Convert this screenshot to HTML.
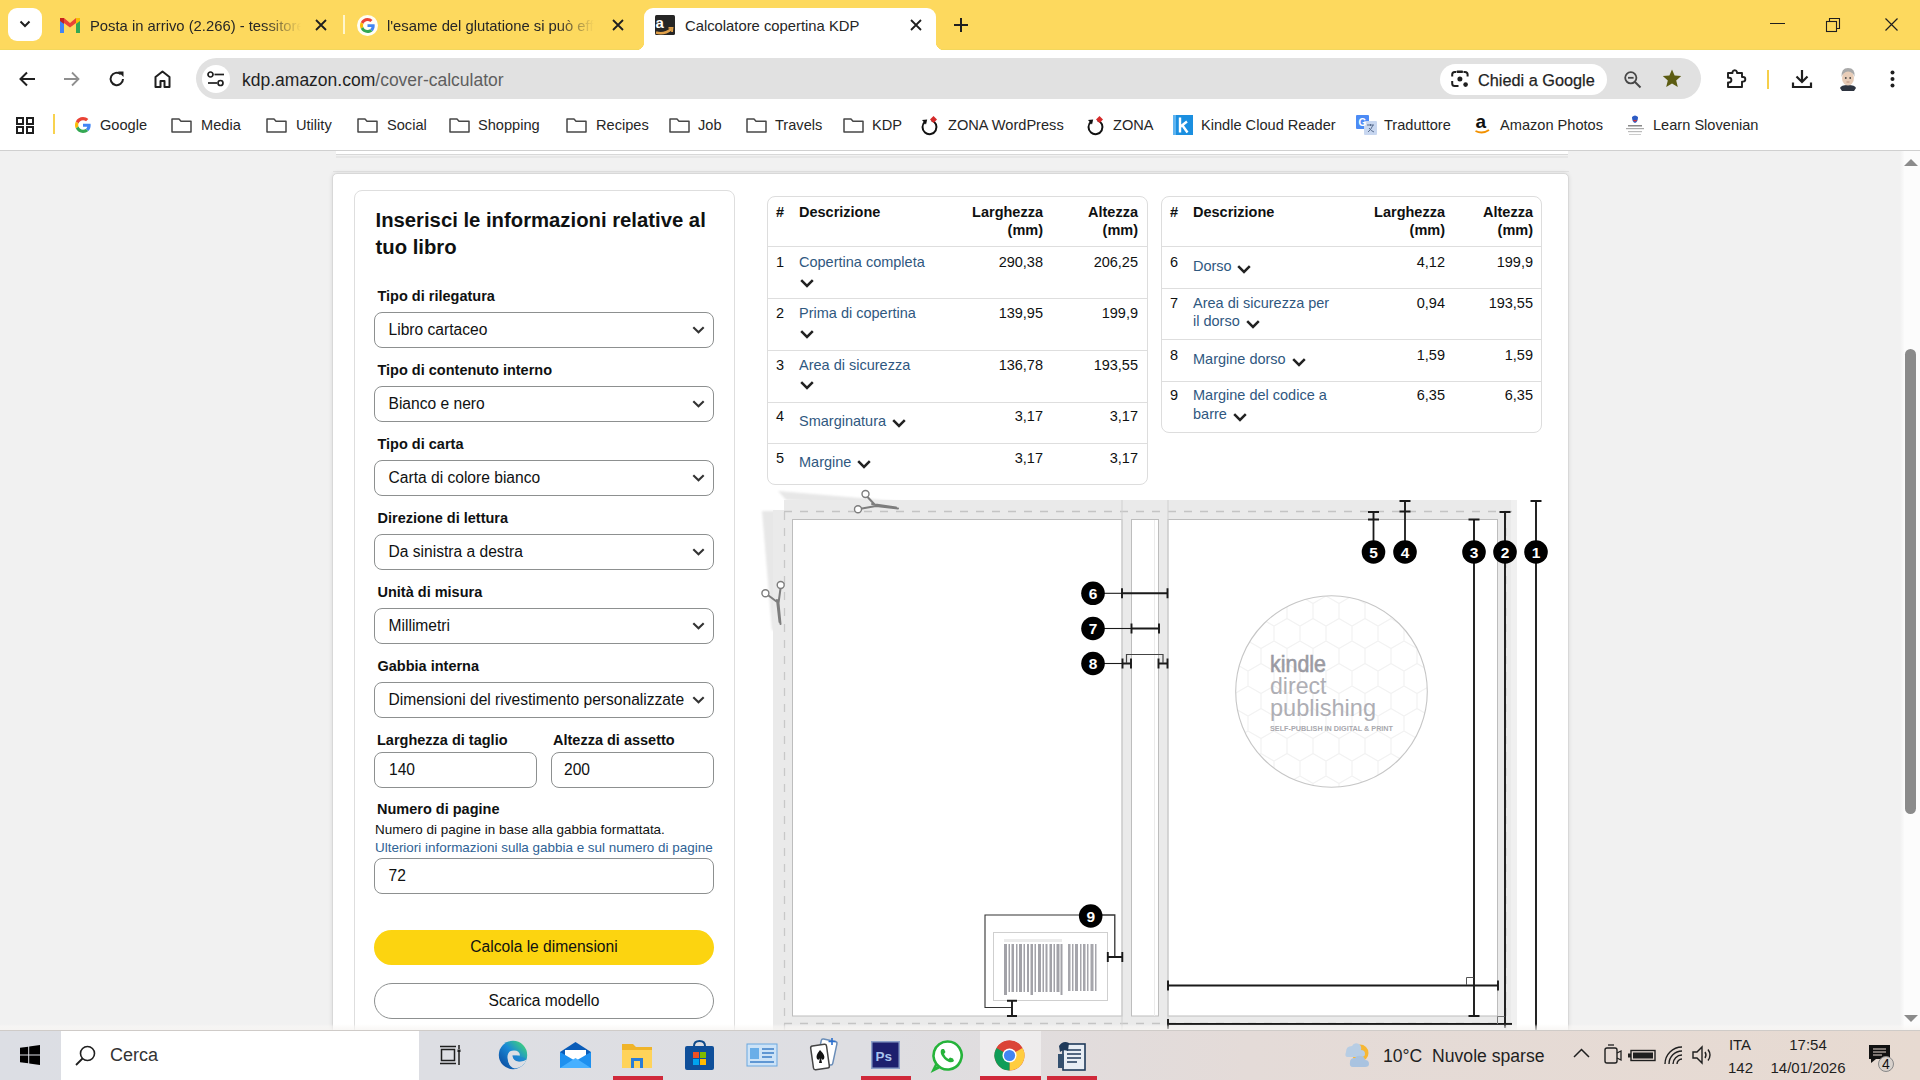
<!DOCTYPE html>
<html><head><meta charset="utf-8">
<style>
*{box-sizing:border-box;margin:0;padding:0}
html,body{width:1920px;height:1080px;overflow:hidden;background:#f1f1f1;font-family:"Liberation Sans",sans-serif;color:#0f1111}
.a{position:absolute;white-space:nowrap}
svg{position:absolute;overflow:visible}
#tabbar{position:absolute;left:0;top:0;width:1920px;height:50px;background:#fdd95e}
#toolbar{position:absolute;left:0;top:50px;width:1920px;height:50px;background:#fff}
#bookbar{position:absolute;left:0;top:100px;width:1920px;height:51px;background:#fff;border-bottom:1px solid #d0d0d0}
.tabt{font-size:14.8px;color:#262626;top:18px;line-height:17px}
.bm{font-size:14.6px;color:#262626;top:117px;line-height:17px}
#taskbar{position:absolute;left:0;top:1030px;width:1920px;height:50px;background:linear-gradient(90deg,#dcdee4 0%,#dedee2 45%,#e4dbd8 65%,#e7dad1 100%)}
.lbl{font-size:14.5px;font-weight:bold;line-height:17px;color:#0f1111}
.sel{height:36px;border:1px solid #8d9090;border-radius:8px;background:#fff}
.stxt{font-size:15.6px;line-height:18px;color:#0f1111}
</style></head><body>
<!-- TAB BAR -->
<div id="tabbar">
  <div class="a" style="left:0;top:48.5px;width:1920px;height:1.5px;background:#f3d75c"></div>
  <div class="a" style="left:8px;top:8px;width:34px;height:33px;background:#fff;border-radius:9px"></div>
  <svg style="left:19px;top:20px" width="12" height="8" viewBox="0 0 12 8"><path d="M1.5 1.5 L6 6 L10.5 1.5" fill="none" stroke="#1f1f1f" stroke-width="2"/></svg>
  <!-- gmail -->
  <svg style="left:60px;top:18px" width="20" height="15" viewBox="0 0 20 15"><path d="M0 2 V15 H4 V5 Z" fill="#4285f4"/><path d="M16 5 V15 H20 V2 Z" fill="#34a853"/><path d="M0 2 L10 9.5 L20 2 V0 L16 0 L10 5 L4 0 L0 0Z" fill="#ea4335"/><path d="M16 0 L20 0 V3 L16 6Z" fill="#fbbc04"/><path d="M0 0 H4 V6 L0 3Z" fill="#c5221f"/></svg>
  <div class="a tabt" style="left:90px;width:211px;overflow:hidden;-webkit-mask-image:linear-gradient(90deg,#000 82%,transparent 100%)">Posta in arrivo (2.266) - tessitore</div>
  <svg style="left:315px;top:19px" width="12" height="12" viewBox="0 0 12 12"><path d="M1 1 L11 11 M11 1 L1 11" stroke="#1f1f1f" stroke-width="1.8"/></svg>
  <div class="a" style="left:342.5px;top:15px;width:2px;height:19px;background:#fff6cc"></div>
  <!-- google G -->
  <div class="a" style="left:357px;top:14.5px;width:21px;height:21px;border-radius:50%;background:#fffef6"></div><svg style="left:360px;top:17.5px" width="15" height="15" viewBox="0 0 48 48"><path fill="#EA4335" d="M24 9.5c3.54 0 6.71 1.22 9.21 3.6l6.85-6.85C35.9 2.38 30.47 0 24 0 14.62 0 6.51 5.38 2.56 13.22l7.98 6.19C12.43 13.72 17.74 9.5 24 9.5z"/><path fill="#4285F4" d="M46.98 24.55c0-1.57-.15-3.09-.38-4.55H24v9.02h12.94c-.58 2.96-2.26 5.48-4.78 7.18l7.73 6c4.51-4.18 7.09-10.36 7.09-17.65z"/><path fill="#FBBC05" d="M10.53 28.59c-.48-1.45-.76-2.99-.76-4.59s.27-3.14.76-4.59l-7.98-6.19C.92 16.46 0 20.12 0 24c0 3.88.92 7.54 2.56 10.78l7.97-6.19z"/><path fill="#34A853" d="M24 48c6.48 0 11.93-2.13 15.89-5.81l-7.73-6c-2.15 1.45-4.92 2.3-8.16 2.3-6.26 0-11.57-4.22-13.47-9.91l-7.98 6.19C6.51 42.62 14.62 48 24 48z"/></svg>
  <div class="a tabt" style="left:387px;width:207px;overflow:hidden;-webkit-mask-image:linear-gradient(90deg,#000 82%,transparent 100%)">l'esame del glutatione si può effettuare</div>
  <svg style="left:612px;top:19px" width="12" height="12" viewBox="0 0 12 12"><path d="M1 1 L11 11 M11 1 L1 11" stroke="#1f1f1f" stroke-width="1.8"/></svg>
  <!-- active tab -->
  <div class="a" style="left:644px;top:8px;width:292px;height:44px;background:#fff;border-radius:9px 9px 0 0"></div>
  <div class="a" style="left:636px;top:42px;width:8px;height:8px;background:radial-gradient(circle at 0 0,transparent 8px,#fff 8.5px)"></div>
  <div class="a" style="left:936px;top:42px;width:8px;height:8px;background:radial-gradient(circle at 8px 0,transparent 8px,#fff 8.5px)"></div>
  <svg style="left:655px;top:15px" width="20" height="20" viewBox="0 0 20 20"><rect width="20" height="20" rx="1.5" fill="#262626"/><text x="0.6" y="12.5" font-family="Liberation Sans" font-weight="bold" font-size="15" fill="#fff">a</text><path d="M1 17.5 Q9 20 16.5 14" stroke="#e0a04a" stroke-width="2.6" fill="none"/><path d="M13.5 12.8 L17.5 12.8 L17 17" stroke="#e0a04a" stroke-width="1.8" fill="none"/></svg>
  <div class="a tabt" style="left:685px">Calcolatore copertina KDP</div>
  <svg style="left:910px;top:19px" width="12" height="12" viewBox="0 0 12 12"><path d="M1 1 L11 11 M11 1 L1 11" stroke="#1f1f1f" stroke-width="1.8"/></svg>
  <svg style="left:954px;top:18px" width="14" height="14" viewBox="0 0 14 14"><path d="M7 0 V14 M0 7 H14" stroke="#1f1f1f" stroke-width="2"/></svg>
  <!-- window controls -->
  <div class="a" style="left:1770px;top:23px;width:15px;height:1px;background:#1f1f1f"></div>
  <svg style="left:1826px;top:18px" width="14" height="14" viewBox="0 0 14 14"><rect x="0.5" y="3.5" width="10" height="10" fill="none" stroke="#1f1f1f" stroke-width="1.1"/><path d="M3.5 3.5 V0.5 H13.5 V10.5 H10.5" fill="none" stroke="#1f1f1f" stroke-width="1.1"/></svg>
  <svg style="left:1885px;top:18px" width="13" height="13" viewBox="0 0 13 13"><path d="M0.5 0.5 L12.5 12.5 M12.5 0.5 L0.5 12.5" stroke="#1f1f1f" stroke-width="1.2"/></svg>
</div>

<!-- TOOLBAR -->
<div id="toolbar"></div>
<svg style="left:19px;top:71px" width="17" height="16" viewBox="0 0 17 16"><path d="M16 8 H2 M8 1.5 L1.5 8 L8 14.5" fill="none" stroke="#1f1f1f" stroke-width="2"/></svg>
<svg style="left:63px;top:71px" width="17" height="16" viewBox="0 0 17 16"><path d="M1 8 H15 M9 1.5 L15.5 8 L9 14.5" fill="none" stroke="#8f8f8f" stroke-width="1.8"/></svg>
<svg style="left:108px;top:70px" width="18" height="18" viewBox="0 0 18 18"><path d="M15 9 A6.2 6.2 0 1 1 12.8 4.2" fill="none" stroke="#1f1f1f" stroke-width="2"/><path d="M10 1.5 H15.5 V7 Z" fill="#1f1f1f"/></svg>
<svg style="left:154px;top:70px" width="17" height="18" viewBox="0 0 17 18"><path d="M1.5 17 V7 L8.5 1.5 L15.5 7 V17 H10.5 V11 H6.5 V17 Z" fill="none" stroke="#1f1f1f" stroke-width="2" stroke-linejoin="round"/></svg>
<div class="a" style="left:196px;top:58px;width:1505px;height:41px;background:#e1e1e1;border-radius:21px"></div>
<div class="a" style="left:202px;top:65px;width:28px;height:28px;background:#fff;border-radius:14px"></div>
<svg style="left:207px;top:71px" width="18" height="16" viewBox="0 0 18 16"><circle cx="3.5" cy="3.5" r="2.5" fill="none" stroke="#1f1f1f" stroke-width="1.7"/><path d="M7.5 3.5 H17" stroke="#1f1f1f" stroke-width="1.7"/><circle cx="13.5" cy="12" r="2.5" fill="none" stroke="#1f1f1f" stroke-width="1.7"/><path d="M1 12 H10" stroke="#1f1f1f" stroke-width="1.7"/></svg>
<div class="a" style="left:242px;top:69px;font-size:17.5px;line-height:22px;color:#1f1f1f">kdp.amazon.com<span style="color:#5e5e5e">/cover-calculator</span></div>
<div class="a" style="left:1440px;top:64px;width:167px;height:31px;background:#fff;border-radius:16px"></div>
<svg style="left:1451px;top:70px" width="18" height="18" viewBox="0 0 18 18"><path d="M1.2 6.5 V4.5 Q1.2 2 3.7 2 H5 M12.5 2 H14 Q16.6 2 16.6 4.5 V6.5 M1.2 11 V13.5 Q1.2 16 3.7 16 H7.5" fill="none" stroke="#1f1f1f" stroke-width="2"/><rect x="5.5" y="0.5" width="6.5" height="2.5" rx="0.8" fill="#1f1f1f"/><circle cx="8.9" cy="9" r="2.5" fill="#1f1f1f"/><circle cx="14.6" cy="14.6" r="2.3" fill="#1f1f1f"/></svg>
<div class="a" style="left:1478px;top:70px;font-size:16.3px;line-height:20px;color:#1f1f1f;-webkit-text-stroke:0.25px #1f1f1f">Chiedi a Google</div>
<svg style="left:1624px;top:71px" width="18" height="18" viewBox="0 0 18 18"><circle cx="6.8" cy="6.8" r="5.6" fill="none" stroke="#474747" stroke-width="1.8"/><path d="M4 6.8 H9.6" stroke="#474747" stroke-width="1.8"/><path d="M11 11 L16.5 16.5" stroke="#474747" stroke-width="2"/></svg>
<svg style="left:1662px;top:69px" width="20" height="19" viewBox="0 0 20 19"><path d="M10 0.5 L12.6 6.6 L19.2 7.1 L14.2 11.4 L15.8 18 L10 14.4 L4.2 18 L5.8 11.4 L0.8 7.1 L7.4 6.6 Z" fill="#5c5c12"/></svg>
<svg style="left:1726px;top:68px" width="22" height="22" viewBox="0 0 22 22"><path d="M2 5 H6.5 V4 A2.3 2.3 0 0 1 11 4 V5 H16 V9 H17 A2.3 2.3 0 0 1 17 13.6 H16 V19 H2 V14.5 H3 A2.4 2.4 0 0 0 3 9.7 H2 Z" fill="none" stroke="#1f1f1f" stroke-width="1.9" stroke-linejoin="round"/></svg>
<div class="a" style="left:1767px;top:70px;width:2px;height:19px;background:#f6cf4a"></div>
<svg style="left:1792px;top:69px" width="20" height="20" viewBox="0 0 20 20"><path d="M10 1 V13 M4.5 7.5 L10 13 L15.5 7.5 M1 13.5 V18 H19 V13.5" fill="none" stroke="#1f1f1f" stroke-width="2.2"/></svg>
<svg style="left:1837px;top:66px" width="22" height="26" viewBox="0 0 22 26"><path d="M3 22 Q4 19 11 19 Q18 19 19 22 L17 25 H5Z" fill="#2e3440"/><ellipse cx="11" cy="12" rx="6" ry="7.5" fill="#e8cdb8"/><path d="M4.5 11 Q4 2 11 2 Q18.5 2 17.5 11 Q16.5 6 11 5.5 Q6 6 4.5 11Z" fill="#a9a9a9"/><circle cx="8.8" cy="12" r="0.9" fill="#444"/><circle cx="13.2" cy="12" r="0.9" fill="#444"/><path d="M9.5 16 H12.5" stroke="#b08070" stroke-width="0.8"/></svg>
<svg style="left:1890px;top:70px" width="5" height="18" viewBox="0 0 5 18"><circle cx="2.5" cy="2.5" r="2" fill="#1f1f1f"/><circle cx="2.5" cy="9" r="2" fill="#1f1f1f"/><circle cx="2.5" cy="15.5" r="2" fill="#1f1f1f"/></svg>

<!-- BOOKMARKS -->
<div id="bookbar"></div>
<svg style="left:16px;top:117px" width="18" height="17" viewBox="0 0 18 17"><rect x="1" y="1" width="6" height="6" fill="none" stroke="#1f1f1f" stroke-width="2"/><rect x="11" y="1" width="6" height="6" fill="none" stroke="#1f1f1f" stroke-width="2"/><rect x="1" y="10" width="6" height="6" fill="none" stroke="#1f1f1f" stroke-width="2"/><rect x="11" y="10" width="6" height="6" fill="none" stroke="#1f1f1f" stroke-width="2"/></svg>
<div class="a" style="left:53px;top:114px;width:2px;height:20px;background:#f8d24f"></div>
<svg style="left:75px;top:117px" width="16" height="16" viewBox="0 0 48 48"><path fill="#EA4335" d="M24 9.5c3.54 0 6.71 1.220 9.21 3.6l6.85-6.85C35.9 2.38 30.47 0 24 0 14.62 0 6.51 5.38 2.56 13.22l7.98 6.19C12.43 13.72 17.740 9.5 24 9.5z"/><path fill="#4285F4" d="M46.98 24.55c0-1.57-.15-3.09-.38-4.55H24v9.02h12.94c-.58 2.96-2.26 5.48-4.78 7.18l7.73 6c4.51-4.18 7.09-10.36 7.09-17.65z"/><path fill="#FBBC05" d="M10.53 28.59c-.48-1.45-.76-2.99-.76-4.59s.27-3.14.76-4.59l-7.98-6.19C.92 16.46 0 20.12 0 24c0 3.88.92 7.54 2.56 10.78l7.97-6.19z"/><path fill="#34A853" d="M24 48c6.48 0 11.93-2.13 15.890-5.81l-7.73-6c-2.15 1.45-4.92 2.3-8.16 2.3-6.26 0-11.57-4.22-13.47-9.91l-7.98 6.19C6.51 42.62 14.62 48 24 48z"/></svg>
<div class="a bm" style="left:100px">Google</div>
<svg style="left:171px;top:118px" width="21" height="15" viewBox="0 0 21 15"><path d="M1 1 H8 L10 3.2 H20 V14 H1 Z" fill="none" stroke="#474747" stroke-width="1.5" stroke-linejoin="round"/></svg>
<div class="a bm" style="left:201px">Media</div>
<svg style="left:266px;top:118px" width="21" height="15" viewBox="0 0 21 15"><path d="M1 1 H8 L10 3.2 H20 V14 H1 Z" fill="none" stroke="#474747" stroke-width="1.5" stroke-linejoin="round"/></svg>
<div class="a bm" style="left:296px">Utility</div>
<svg style="left:357px;top:118px" width="21" height="15" viewBox="0 0 21 15"><path d="M1 1 H8 L10 3.2 H20 V14 H1 Z" fill="none" stroke="#474747" stroke-width="1.5" stroke-linejoin="round"/></svg>
<div class="a bm" style="left:387px">Social</div>
<svg style="left:449px;top:118px" width="21" height="15" viewBox="0 0 21 15"><path d="M1 1 H8 L10 3.2 H20 V14 H1 Z" fill="none" stroke="#474747" stroke-width="1.5" stroke-linejoin="round"/></svg>
<div class="a bm" style="left:478px">Shopping</div>
<svg style="left:566px;top:118px" width="21" height="15" viewBox="0 0 21 15"><path d="M1 1 H8 L10 3.2 H20 V14 H1 Z" fill="none" stroke="#474747" stroke-width="1.5" stroke-linejoin="round"/></svg>
<div class="a bm" style="left:596px">Recipes</div>
<svg style="left:669px;top:118px" width="21" height="15" viewBox="0 0 21 15"><path d="M1 1 H8 L10 3.2 H20 V14 H1 Z" fill="none" stroke="#474747" stroke-width="1.5" stroke-linejoin="round"/></svg>
<div class="a bm" style="left:698px">Job</div>
<svg style="left:746px;top:118px" width="21" height="15" viewBox="0 0 21 15"><path d="M1 1 H8 L10 3.2 H20 V14 H1 Z" fill="none" stroke="#474747" stroke-width="1.5" stroke-linejoin="round"/></svg>
<div class="a bm" style="left:775px">Travels</div>
<svg style="left:843px;top:118px" width="21" height="15" viewBox="0 0 21 15"><path d="M1 1 H8 L10 3.2 H20 V14 H1 Z" fill="none" stroke="#474747" stroke-width="1.5" stroke-linejoin="round"/></svg>
<div class="a bm" style="left:872px">KDP</div>
<svg style="left:919px;top:115px" width="20" height="20" viewBox="0 0 20 20"><path d="M6.2 6.6 A7 7 0 1 0 12.5 5.4" fill="none" stroke="#111" stroke-width="2"/><path d="M3 5 L8.2 4.6 L7 9.4 Z" fill="#111"/><path d="M14.5 1 L18 4.5 L14.5 8 L11 4.5Z" fill="#d42a2a"/></svg>
<div class="a bm" style="left:948px">ZONA WordPress</div>
<svg style="left:1085px;top:115px" width="20" height="20" viewBox="0 0 20 20"><path d="M6.2 6.6 A7 7 0 1 0 12.5 5.4" fill="none" stroke="#111" stroke-width="2"/><path d="M3 5 L8.2 4.6 L7 9.4 Z" fill="#111"/><path d="M14.5 1 L18 4.5 L14.5 8 L11 4.5Z" fill="#d42a2a"/></svg>
<div class="a bm" style="left:1113px">ZONA</div>
<svg style="left:1173px;top:115px" width="20" height="20" viewBox="0 0 20 20"><rect width="20" height="20" fill="#1b8fe0"/><rect x="0" y="0" width="3" height="20" fill="#5fb4f0"/><path d="M7 2.5 V17.5 M7 12 L14 6.5 M9.5 10.5 L14.5 17.5" stroke="#fff" stroke-width="2.4" fill="none"/></svg>
<div class="a bm" style="left:1201px">Kindle Cloud Reader</div>
<svg style="left:1356px;top:115px" width="22" height="20" viewBox="0 0 22 20"><rect x="0" y="0" width="13" height="14" rx="1" fill="#4c8bf5"/><rect x="8" y="6" width="13" height="14" rx="1" fill="#c8d7f0"/><text x="2.5" y="11" font-family="Liberation Sans" font-weight="bold" font-size="10" fill="#fff">G</text><path d="M11 10 H18 M14.5 9 V11 M12 17 Q15 15 17 10 M13 13 Q15 16 18 17" stroke="#5a6f90" stroke-width="1" fill="none"/></svg>
<div class="a bm" style="left:1384px">Traduttore</div>
<svg style="left:1474px;top:113px" width="18" height="22" viewBox="0 0 18 22"><text x="1.5" y="15" font-family="Liberation Sans" font-weight="bold" font-size="19" fill="#111">a</text><path d="M1.5 18 Q8.5 21.5 15 17" stroke="#f29100" stroke-width="1.8" fill="none"/></svg>
<div class="a bm" style="left:1500px">Amazon Photos</div>
<svg style="left:1624px;top:114px" width="22" height="22" viewBox="0 0 22 22"><path d="M8 3 Q11 0 14 3 Q14 8 11 9 Q8 8 8 3Z" fill="#2d5bc4"/><path d="M9 6 Q11 9 13 6" fill="#e0302a"/><rect x="4" y="11" width="14" height="1.5" fill="#888"/><rect x="2" y="14" width="18" height="1.2" fill="#aaa"/><rect x="4" y="17" width="14" height="1.2" fill="#bbb"/><rect x="5" y="20" width="12" height="1" fill="#ccc"/></svg>
<div class="a bm" style="left:1653px">Learn Slovenian</div>
<!-- CONTENT -->
<div class="a" style="left:336px;top:151px;width:1232px;height:4px;background:#fff;border-bottom:1px solid #d8d8d8"></div>
<div class="a" style="left:336px;top:156px;width:1232px;height:2px;background:#e6e6e6"></div>
<div class="a" style="left:333px;top:171px;width:1236px;height:1px;background:#e2e2e2"></div>
<div class="a" style="left:332px;top:173px;width:1237px;height:900px;background:#fff;border:1px solid #d8d8d8;border-radius:5px;box-shadow:0 0 4px rgba(0,0,0,0.10)"></div>
<div class="a" style="left:354px;top:190px;width:381px;height:850px;background:#fff;border:1px solid #dedede;border-radius:8px"></div>
<div class="a" style="left:375.5px;top:207.57px;font-size:20.3px;line-height:24px;font-weight:700;color:#0f1111;">Inserisci le informazioni relative al</div>
<div class="a" style="left:375.5px;top:234.57px;font-size:20.3px;line-height:24px;font-weight:700;color:#0f1111;">tuo libro</div>
<div class="a" style="left:377.5px;top:288.38px;font-size:14.5px;line-height:17px;font-weight:700;color:#0f1111;">Tipo di rilegatura</div>
<div class="a sel" style="left:374px;top:312.4px;width:340px"></div>
<div class="a" style="left:388.5px;top:319.99px;font-size:15.6px;line-height:19px;font-weight:400;color:#0f1111;">Libro cartaceo</div>
<svg style="left:692px;top:325.9px" width="13" height="8" viewBox="0 0 13 8"><path d="M1.3 1.3 L6.5 6.3 L11.7 1.3" fill="none" stroke="#333" stroke-width="2.1"/></svg>
<div class="a" style="left:377.5px;top:362.38px;font-size:14.5px;line-height:17px;font-weight:700;color:#0f1111;">Tipo di contenuto interno</div>
<div class="a sel" style="left:374px;top:386.4px;width:340px"></div>
<div class="a" style="left:388.5px;top:393.99px;font-size:15.6px;line-height:19px;font-weight:400;color:#0f1111;">Bianco e nero</div>
<svg style="left:692px;top:399.9px" width="13" height="8" viewBox="0 0 13 8"><path d="M1.3 1.3 L6.5 6.3 L11.7 1.3" fill="none" stroke="#333" stroke-width="2.1"/></svg>
<div class="a" style="left:377.5px;top:436.38px;font-size:14.5px;line-height:17px;font-weight:700;color:#0f1111;">Tipo di carta</div>
<div class="a sel" style="left:374px;top:460.4px;width:340px"></div>
<div class="a" style="left:388.5px;top:467.99px;font-size:15.6px;line-height:19px;font-weight:400;color:#0f1111;">Carta di colore bianco</div>
<svg style="left:692px;top:473.9px" width="13" height="8" viewBox="0 0 13 8"><path d="M1.3 1.3 L6.5 6.3 L11.7 1.3" fill="none" stroke="#333" stroke-width="2.1"/></svg>
<div class="a" style="left:377.5px;top:510.38px;font-size:14.5px;line-height:17px;font-weight:700;color:#0f1111;">Direzione di lettura</div>
<div class="a sel" style="left:374px;top:534.4px;width:340px"></div>
<div class="a" style="left:388.5px;top:541.99px;font-size:15.6px;line-height:19px;font-weight:400;color:#0f1111;">Da sinistra a destra</div>
<svg style="left:692px;top:547.9px" width="13" height="8" viewBox="0 0 13 8"><path d="M1.3 1.3 L6.5 6.3 L11.7 1.3" fill="none" stroke="#333" stroke-width="2.1"/></svg>
<div class="a" style="left:377.5px;top:584.38px;font-size:14.5px;line-height:17px;font-weight:700;color:#0f1111;">Unità di misura</div>
<div class="a sel" style="left:374px;top:608.4px;width:340px"></div>
<div class="a" style="left:388.5px;top:615.99px;font-size:15.6px;line-height:19px;font-weight:400;color:#0f1111;">Millimetri</div>
<svg style="left:692px;top:621.9px" width="13" height="8" viewBox="0 0 13 8"><path d="M1.3 1.3 L6.5 6.3 L11.7 1.3" fill="none" stroke="#333" stroke-width="2.1"/></svg>
<div class="a" style="left:377.5px;top:658.38px;font-size:14.5px;line-height:17px;font-weight:700;color:#0f1111;">Gabbia interna</div>
<div class="a sel" style="left:374px;top:682.4px;width:340px"></div>
<div class="a" style="left:388.5px;top:689.99px;font-size:15.6px;line-height:19px;font-weight:400;color:#0f1111;">Dimensioni del rivestimento personalizzate</div>
<svg style="left:692px;top:695.9px" width="13" height="8" viewBox="0 0 13 8"><path d="M1.3 1.3 L6.5 6.3 L11.7 1.3" fill="none" stroke="#333" stroke-width="2.1"/></svg>
<div class="a" style="left:377px;top:732.18px;font-size:14.5px;line-height:17px;font-weight:700;color:#0f1111;">Larghezza di taglio</div>
<div class="a" style="left:553px;top:732.18px;font-size:14.5px;line-height:17px;font-weight:700;color:#0f1111;">Altezza di assetto</div>
<div class="a sel" style="left:374px;top:752px;width:163px"></div>
<div class="a sel" style="left:551px;top:752px;width:163px"></div>
<div class="a" style="left:389px;top:759.89px;font-size:15.6px;line-height:19px;font-weight:400;color:#0f1111;">140</div>
<div class="a" style="left:564px;top:759.89px;font-size:15.6px;line-height:19px;font-weight:400;color:#0f1111;">200</div>
<div class="a" style="left:377px;top:801.18px;font-size:14.5px;line-height:17px;font-weight:700;color:#0f1111;">Numero di pagine</div>
<div class="a" style="left:375px;top:822.34px;font-size:13.45px;line-height:16px;font-weight:400;color:#0f1111;">Numero di pagine in base alla gabbia formattata.</div>
<div class="a" style="left:375px;top:840.14px;font-size:13.45px;line-height:16px;font-weight:400;color:#2e6295;">Ulteriori informazioni sulla gabbia e sul numero di pagine</div>
<div class="a sel" style="left:374px;top:858.3px;width:340px"></div>
<div class="a" style="left:388.5px;top:865.89px;font-size:15.6px;line-height:19px;font-weight:400;color:#0f1111;">72</div>
<div class="a" style="left:374px;top:929.5px;width:340px;height:35.5px;border-radius:18px;background:#fcd410"></div>
<div class="a" style="left:244px;top:936.69px;width:600px;text-align:center;font-size:15.6px;line-height:19px;font-weight:400;color:#0f1111;">Calcola le dimensioni</div>
<div class="a" style="left:374px;top:983px;width:340px;height:36px;border-radius:18px;background:#fff;border:1px solid #8d9090"></div>
<div class="a" style="left:244px;top:990.59px;width:600px;text-align:center;font-size:15.6px;line-height:19px;font-weight:400;color:#0f1111;">Scarica modello</div>
<div class="a" style="left:767px;top:196px;width:381px;height:289px;border:1px solid #dddddd;border-radius:8px;background:#fff"></div>
<div class="a" style="left:768px;top:246px;width:379px;height:1px;background:#dedede"></div>
<div class="a" style="left:768px;top:298px;width:379px;height:1px;background:#dedede"></div>
<div class="a" style="left:768px;top:350px;width:379px;height:1px;background:#dedede"></div>
<div class="a" style="left:768px;top:402px;width:379px;height:1px;background:#dedede"></div>
<div class="a" style="left:768px;top:443px;width:379px;height:1px;background:#dedede"></div>
<div class="a" style="left:776px;top:203.68px;font-size:14.5px;line-height:17px;font-weight:700;color:#0f1111;">#</div>
<div class="a" style="left:799px;top:203.68px;font-size:14.5px;line-height:17px;font-weight:700;color:#0f1111;">Descrizione</div>
<div class="a" style="left:743px;top:203.68px;width:300px;text-align:right;font-size:14.5px;line-height:17px;font-weight:700;color:#0f1111;">Larghezza</div>
<div class="a" style="left:743px;top:221.78px;width:300px;text-align:right;font-size:14.5px;line-height:17px;font-weight:700;color:#0f1111;">(mm)</div>
<div class="a" style="left:838px;top:203.68px;width:300px;text-align:right;font-size:14.5px;line-height:17px;font-weight:700;color:#0f1111;">Altezza</div>
<div class="a" style="left:838px;top:221.78px;width:300px;text-align:right;font-size:14.5px;line-height:17px;font-weight:700;color:#0f1111;">(mm)</div>
<div class="a" style="left:776px;top:254.08px;font-size:14.5px;line-height:17px;font-weight:400;color:#0f1111;">1</div>
<div class="a" style="left:799px;top:254.08px;font-size:14.5px;line-height:17px;font-weight:400;color:#30587f;">Copertina completa</div>
<div class="a" style="left:743px;top:254.08px;width:300px;text-align:right;font-size:14.5px;line-height:17px;font-weight:400;color:#0f1111;">290,38</div>
<div class="a" style="left:838px;top:254.08px;width:300px;text-align:right;font-size:14.5px;line-height:17px;font-weight:400;color:#0f1111;">206,25</div>
<svg style="left:800.0px;top:279.3px" width="14" height="9" viewBox="0 0 14 9"><path d="M1.2 1.2 L7 7 L12.8 1.2" fill="none" stroke="#222" stroke-width="2.5"/></svg>
<div class="a" style="left:776px;top:305.18px;font-size:14.5px;line-height:17px;font-weight:400;color:#0f1111;">2</div>
<div class="a" style="left:799px;top:305.18px;font-size:14.5px;line-height:17px;font-weight:400;color:#30587f;">Prima di copertina</div>
<div class="a" style="left:743px;top:305.18px;width:300px;text-align:right;font-size:14.5px;line-height:17px;font-weight:400;color:#0f1111;">139,95</div>
<div class="a" style="left:838px;top:305.18px;width:300px;text-align:right;font-size:14.5px;line-height:17px;font-weight:400;color:#0f1111;">199,9</div>
<svg style="left:800.0px;top:329.8px" width="14" height="9" viewBox="0 0 14 9"><path d="M1.2 1.2 L7 7 L12.8 1.2" fill="none" stroke="#222" stroke-width="2.5"/></svg>
<div class="a" style="left:776px;top:357.08px;font-size:14.5px;line-height:17px;font-weight:400;color:#0f1111;">3</div>
<div class="a" style="left:799px;top:357.08px;font-size:14.5px;line-height:17px;font-weight:400;color:#30587f;">Area di sicurezza</div>
<div class="a" style="left:743px;top:357.08px;width:300px;text-align:right;font-size:14.5px;line-height:17px;font-weight:400;color:#0f1111;">136,78</div>
<div class="a" style="left:838px;top:357.08px;width:300px;text-align:right;font-size:14.5px;line-height:17px;font-weight:400;color:#0f1111;">193,55</div>
<svg style="left:800.0px;top:381.3px" width="14" height="9" viewBox="0 0 14 9"><path d="M1.2 1.2 L7 7 L12.8 1.2" fill="none" stroke="#222" stroke-width="2.5"/></svg>
<div class="a" style="left:776px;top:407.98px;font-size:14.5px;line-height:17px;font-weight:400;color:#0f1111;">4</div>
<div class="a" style="left:799px;top:412.58px;font-size:14.5px;line-height:17px;font-weight:400;color:#30587f;">Smarginatura</div>
<div class="a" style="left:743px;top:407.98px;width:300px;text-align:right;font-size:14.5px;line-height:17px;font-weight:400;color:#0f1111;">3,17</div>
<div class="a" style="left:838px;top:407.98px;width:300px;text-align:right;font-size:14.5px;line-height:17px;font-weight:400;color:#0f1111;">3,17</div>
<svg style="left:892.0px;top:418.5px" width="14" height="9" viewBox="0 0 14 9"><path d="M1.2 1.2 L7 7 L12.8 1.2" fill="none" stroke="#222" stroke-width="2.5"/></svg>
<div class="a" style="left:776px;top:449.58px;font-size:14.5px;line-height:17px;font-weight:400;color:#0f1111;">5</div>
<div class="a" style="left:799px;top:454.28px;font-size:14.5px;line-height:17px;font-weight:400;color:#30587f;">Margine</div>
<div class="a" style="left:743px;top:449.58px;width:300px;text-align:right;font-size:14.5px;line-height:17px;font-weight:400;color:#0f1111;">3,17</div>
<div class="a" style="left:838px;top:449.58px;width:300px;text-align:right;font-size:14.5px;line-height:17px;font-weight:400;color:#0f1111;">3,17</div>
<svg style="left:857.0px;top:460.2px" width="14" height="9" viewBox="0 0 14 9"><path d="M1.2 1.2 L7 7 L12.8 1.2" fill="none" stroke="#222" stroke-width="2.5"/></svg>
<div class="a" style="left:1161px;top:196px;width:381px;height:237px;border:1px solid #dddddd;border-radius:8px;background:#fff"></div>
<div class="a" style="left:1162px;top:246px;width:379px;height:1px;background:#dedede"></div>
<div class="a" style="left:1162px;top:288px;width:379px;height:1px;background:#dedede"></div>
<div class="a" style="left:1162px;top:339px;width:379px;height:1px;background:#dedede"></div>
<div class="a" style="left:1162px;top:381px;width:379px;height:1px;background:#dedede"></div>
<div class="a" style="left:1170px;top:203.68px;font-size:14.5px;line-height:17px;font-weight:700;color:#0f1111;">#</div>
<div class="a" style="left:1193px;top:203.68px;font-size:14.5px;line-height:17px;font-weight:700;color:#0f1111;">Descrizione</div>
<div class="a" style="left:1145px;top:203.68px;width:300px;text-align:right;font-size:14.5px;line-height:17px;font-weight:700;color:#0f1111;">Larghezza</div>
<div class="a" style="left:1145px;top:221.78px;width:300px;text-align:right;font-size:14.5px;line-height:17px;font-weight:700;color:#0f1111;">(mm)</div>
<div class="a" style="left:1233px;top:203.68px;width:300px;text-align:right;font-size:14.5px;line-height:17px;font-weight:700;color:#0f1111;">Altezza</div>
<div class="a" style="left:1233px;top:221.78px;width:300px;text-align:right;font-size:14.5px;line-height:17px;font-weight:700;color:#0f1111;">(mm)</div>
<div class="a" style="left:1170px;top:254.28px;font-size:14.5px;line-height:17px;font-weight:400;color:#0f1111;">6</div>
<div class="a" style="left:1193px;top:258.38px;font-size:14.5px;line-height:17px;font-weight:400;color:#30587f;">Dorso</div>
<div class="a" style="left:1145px;top:254.28px;width:300px;text-align:right;font-size:14.5px;line-height:17px;font-weight:400;color:#0f1111;">4,12</div>
<div class="a" style="left:1233px;top:254.28px;width:300px;text-align:right;font-size:14.5px;line-height:17px;font-weight:400;color:#0f1111;">199,9</div>
<svg style="left:1237.0px;top:264.8px" width="14" height="9" viewBox="0 0 14 9"><path d="M1.2 1.2 L7 7 L12.8 1.2" fill="none" stroke="#222" stroke-width="2.5"/></svg>
<div class="a" style="left:1170px;top:294.98px;font-size:14.5px;line-height:17px;font-weight:400;color:#0f1111;">7</div>
<div class="a" style="left:1193px;top:294.98px;font-size:14.5px;line-height:17px;font-weight:400;color:#30587f;">Area di sicurezza per</div>
<div class="a" style="left:1193px;top:313.18px;font-size:14.5px;line-height:17px;font-weight:400;color:#30587f;">il dorso</div>
<div class="a" style="left:1145px;top:294.98px;width:300px;text-align:right;font-size:14.5px;line-height:17px;font-weight:400;color:#0f1111;">0,94</div>
<div class="a" style="left:1233px;top:294.98px;width:300px;text-align:right;font-size:14.5px;line-height:17px;font-weight:400;color:#0f1111;">193,55</div>
<svg style="left:1246.3px;top:319.8px" width="14" height="9" viewBox="0 0 14 9"><path d="M1.2 1.2 L7 7 L12.8 1.2" fill="none" stroke="#222" stroke-width="2.5"/></svg>
<div class="a" style="left:1170px;top:346.88px;font-size:14.5px;line-height:17px;font-weight:400;color:#0f1111;">8</div>
<div class="a" style="left:1193px;top:351.48px;font-size:14.5px;line-height:17px;font-weight:400;color:#30587f;">Margine dorso</div>
<div class="a" style="left:1145px;top:346.88px;width:300px;text-align:right;font-size:14.5px;line-height:17px;font-weight:400;color:#0f1111;">1,59</div>
<div class="a" style="left:1233px;top:346.88px;width:300px;text-align:right;font-size:14.5px;line-height:17px;font-weight:400;color:#0f1111;">1,59</div>
<svg style="left:1292.0px;top:357.8px" width="14" height="9" viewBox="0 0 14 9"><path d="M1.2 1.2 L7 7 L12.8 1.2" fill="none" stroke="#222" stroke-width="2.5"/></svg>
<div class="a" style="left:1170px;top:387.48px;font-size:14.5px;line-height:17px;font-weight:400;color:#0f1111;">9</div>
<div class="a" style="left:1193px;top:387.48px;font-size:14.5px;line-height:17px;font-weight:400;color:#30587f;">Margine del codice a</div>
<div class="a" style="left:1193px;top:405.78px;font-size:14.5px;line-height:17px;font-weight:400;color:#30587f;">barre</div>
<div class="a" style="left:1145px;top:387.48px;width:300px;text-align:right;font-size:14.5px;line-height:17px;font-weight:400;color:#0f1111;">6,35</div>
<div class="a" style="left:1233px;top:387.48px;width:300px;text-align:right;font-size:14.5px;line-height:17px;font-weight:400;color:#0f1111;">6,35</div>
<svg style="left:1233.3px;top:412.8px" width="14" height="9" viewBox="0 0 14 9"><path d="M1.2 1.2 L7 7 L12.8 1.2" fill="none" stroke="#222" stroke-width="2.5"/></svg>
<svg style="left:740px;top:480px" width="830" height="550" viewBox="740 480 830 550">
<defs><pattern id="hex" width="26" height="45" patternUnits="userSpaceOnUse" x="1235" y="596"><path d="M13 0 L26 7.5 V22.5 L13 30 L0 22.5 V7.5 Z M13 30 V45" fill="none" stroke="#f2f2f2" stroke-width="1.2"/></pattern>
<filter id="blur1" x="-20%" y="-20%" width="140%" height="140%"><feGaussianBlur stdDeviation="1.3"/></filter></defs>
<path d="M778 491 L906 502 L906 507 L786 500 Z" fill="#e7e7e7" filter="url(#blur1)"/>
<path d="M762 511 L775 511 L782 632 L772 630 Z" fill="#e7e7e7" filter="url(#blur1)"/>
<rect x="784" y="500" width="729" height="530" fill="#eaeaea"/>
<rect x="773" y="510" width="20" height="520" fill="#eaeaea"/>
<rect x="1511" y="500" width="6" height="530" fill="#f0f0f0"/>
<path d="M784 511.5 H1512" stroke="#c4c4c4" stroke-width="1.4" stroke-dasharray="8 8"/>
<path d="M784.5 512 V1030" stroke="#c8c8c8" stroke-width="1.3" stroke-dasharray="8 8"/>
<path d="M1506 512 V1030" stroke="#d2d2d2" stroke-width="1.2" stroke-dasharray="8 8"/>
<path d="M784 1023.5 H1512" stroke="#c4c4c4" stroke-width="1.4" stroke-dasharray="8 8"/>
<rect x="792.5" y="519.5" width="329.5" height="496.5" fill="#fff" stroke="#bdbdbd" stroke-width="1"/>
<rect x="1168" y="519.5" width="329.5" height="496.5" fill="#fff" stroke="#bdbdbd" stroke-width="1"/>
<rect x="1131.5" y="519.5" width="27" height="496.5" fill="#fff" stroke="#bdbdbd" stroke-width="1"/>
<path d="M1154.5 520 V1016" stroke="#ececec" stroke-width="1"/>
<path d="M1122 500 V1030 M1168 500 V1030" stroke="#d0d0d0" stroke-width="1"/>
<rect x="993.5" y="932.5" width="114" height="68" fill="#fff" stroke="#cfcfcf" stroke-width="1"/>
<rect x="1004" y="939" width="58" height="3" fill="#ececec"/>
<rect x="1004.0" y="944" width="3" height="51" fill="#a2a2a8"/>
<rect x="1008.5" y="944" width="1.5" height="48" fill="#a2a2a8"/>
<rect x="1011.5" y="944" width="2.5" height="48" fill="#a2a2a8"/>
<rect x="1016.0" y="944" width="1.5" height="48" fill="#a2a2a8"/>
<rect x="1019.0" y="944" width="3" height="48" fill="#a2a2a8"/>
<rect x="1023.5" y="944" width="1.5" height="48" fill="#a2a2a8"/>
<rect x="1027.0" y="944" width="2" height="48" fill="#a2a2a8"/>
<rect x="1030.5" y="944" width="2.5" height="51" fill="#a2a2a8"/>
<rect x="1034.5" y="944" width="1.5" height="48" fill="#a2a2a8"/>
<rect x="1038.0" y="944" width="3" height="48" fill="#a2a2a8"/>
<rect x="1042.5" y="944" width="1.5" height="48" fill="#a2a2a8"/>
<rect x="1045.5" y="944" width="2" height="48" fill="#a2a2a8"/>
<rect x="1049.5" y="944" width="2.5" height="48" fill="#a2a2a8"/>
<rect x="1053.5" y="944" width="1.5" height="48" fill="#a2a2a8"/>
<rect x="1056.5" y="944" width="3" height="48" fill="#a2a2a8"/>
<rect x="1060.5" y="944" width="2" height="51" fill="#a2a2a8"/>
<rect x="1068.0" y="944" width="2.5" height="47" fill="#a6a6ac"/>
<rect x="1072.0" y="944" width="1.5" height="47" fill="#a6a6ac"/>
<rect x="1075.0" y="944" width="3" height="47" fill="#a6a6ac"/>
<rect x="1080.0" y="944" width="1.5" height="47" fill="#a6a6ac"/>
<rect x="1083.0" y="944" width="2.5" height="47" fill="#a6a6ac"/>
<rect x="1087.0" y="944" width="1.5" height="47" fill="#a6a6ac"/>
<rect x="1090.5" y="944" width="3" height="47" fill="#a6a6ac"/>
<rect x="1095.0" y="944" width="1.5" height="47" fill="#a6a6ac"/>
<circle cx="1331.5" cy="691.5" r="95.8" fill="url(#hex)" stroke="#c6c6c6" stroke-width="1.1"/>
<text x="1270" y="671.6" font-family="Liberation Sans" font-size="24" fill="#9a9aa2" stroke="#9a9aa2" stroke-width="0.6" textLength="56" lengthAdjust="spacingAndGlyphs">kindle</text>
<text x="1270" y="694.4" font-family="Liberation Sans" font-size="24" fill="#aeaeb4" textLength="56.5" lengthAdjust="spacingAndGlyphs">direct</text>
<text x="1270" y="716.2" font-family="Liberation Sans" font-size="24" fill="#aeaeb4" textLength="106" lengthAdjust="spacingAndGlyphs">publishing</text>
<text x="1270" y="731.3" font-family="Liberation Sans" font-size="7.3" font-weight="bold" fill="#a8a8ae" textLength="123" lengthAdjust="spacingAndGlyphs">SELF-PUBLISH IN DIGITAL &amp; PRINT</text>
<path d="M1536 501 V1030 M1530.5 501 H1541.5" stroke="#1a1a1a" stroke-width="1.9" fill="none"/>
<path d="M1505 512 V1028 M1499.5 512 H1510.5" stroke="#1a1a1a" stroke-width="1.9" fill="none"/>
<path d="M1474 519.5 V1016 M1468.5 519.5 H1479.5 M1468.5 1016 H1479.5" stroke="#1a1a1a" stroke-width="1.9" fill="none"/>
<path d="M1405 501 V511.5 M1399.5 501 H1410.5 M1399.5 511.5 H1410.5" stroke="#1a1a1a" stroke-width="1.9" fill="none"/><path d="M1405 511 V552" stroke="#1a1a1a" stroke-width="1.8"/>
<path d="M1373.5 512 V519.5 M1368.0 512 H1379.0 M1368.0 519.5 H1379.0" stroke="#1a1a1a" stroke-width="1.9" fill="none"/><path d="M1373.5 519 V552" stroke="#1a1a1a" stroke-width="1.8"/>
<path d="M1168 985.5 H1498 M1168 980.5 V990.5 M1498 980.5 V990.5" stroke="#1a1a1a" stroke-width="1.9" fill="none"/>
<path d="M1466.5 985 V977.5 H1473.5" stroke="#555" stroke-width="1" fill="none"/>
<path d="M1168 1024 H1512 M1168 1019 V1029" stroke="#1a1a1a" stroke-width="1.9" fill="none"/>
<path d="M1497.5 1024 V1016.5 H1504.5" stroke="#777" stroke-width="1" fill="none"/>
<path d="M1100 593.3 H1122" stroke="#1a1a1a" stroke-width="1.1"/><path d="M1122 593.3 H1167.5 M1122 588.3 V598.3 M1167.5 588.3 V598.3" stroke="#1a1a1a" stroke-width="1.9" fill="none"/>
<path d="M1100 628.5 H1131" stroke="#1a1a1a" stroke-width="1.1"/><path d="M1131.5 628.5 H1159 M1131.5 623.5 V633.5 M1159 623.5 V633.5" stroke="#1a1a1a" stroke-width="1.9" fill="none"/>
<path d="M1100 663.5 H1122" stroke="#1a1a1a" stroke-width="1.1"/><path d="M1122.5 663.5 H1131 M1122.5 658.5 V668.5 M1131 658.5 V668.5" stroke="#1a1a1a" stroke-width="1.9" fill="none"/><path d="M1158.5 663.5 H1167.5 M1158.5 658.5 V668.5 M1167.5 658.5 V668.5" stroke="#1a1a1a" stroke-width="1.9" fill="none"/>
<path d="M1126.5 663 V654.5 H1163 V663" stroke="#444" stroke-width="1.2" fill="none"/>
<path d="M1090 915 H985 V1007.5 H1012" stroke="#333" stroke-width="1.1" fill="none"/>
<path d="M1090 915 H1114.8 V957" stroke="#333" stroke-width="1.3" fill="none"/>
<path d="M1107.8 957 H1122.3 M1107.8 952.0 V962.0 M1122.3 952.0 V962.0" stroke="#1a1a1a" stroke-width="1.9" fill="none"/>
<path d="M1012 1000.8 V1016 M1007.0 1000.8 H1017.0 M1007.0 1016 H1017.0" stroke="#1a1a1a" stroke-width="1.9" fill="none"/>
<circle cx="1536" cy="552" r="11.8" fill="#000"/><text x="1536" y="557.6" text-anchor="middle" font-family="Liberation Sans" font-size="15.5" font-weight="bold" fill="#fff">1</text>
<circle cx="1505" cy="552" r="11.8" fill="#000"/><text x="1505" y="557.6" text-anchor="middle" font-family="Liberation Sans" font-size="15.5" font-weight="bold" fill="#fff">2</text>
<circle cx="1474" cy="552" r="11.8" fill="#000"/><text x="1474" y="557.6" text-anchor="middle" font-family="Liberation Sans" font-size="15.5" font-weight="bold" fill="#fff">3</text>
<circle cx="1405" cy="552" r="11.8" fill="#000"/><text x="1405" y="557.6" text-anchor="middle" font-family="Liberation Sans" font-size="15.5" font-weight="bold" fill="#fff">4</text>
<circle cx="1373.5" cy="552" r="11.8" fill="#000"/><text x="1373.5" y="557.6" text-anchor="middle" font-family="Liberation Sans" font-size="15.5" font-weight="bold" fill="#fff">5</text>
<circle cx="1093" cy="593.3" r="11.8" fill="#000"/><text x="1093" y="598.9" text-anchor="middle" font-family="Liberation Sans" font-size="15.5" font-weight="bold" fill="#fff">6</text>
<circle cx="1093" cy="628.5" r="11.8" fill="#000"/><text x="1093" y="634.1" text-anchor="middle" font-family="Liberation Sans" font-size="15.5" font-weight="bold" fill="#fff">7</text>
<circle cx="1093" cy="663.5" r="11.8" fill="#000"/><text x="1093" y="669.1" text-anchor="middle" font-family="Liberation Sans" font-size="15.5" font-weight="bold" fill="#fff">8</text>
<circle cx="1090.7" cy="916" r="11.8" fill="#000"/><text x="1090.7" y="921.6" text-anchor="middle" font-family="Liberation Sans" font-size="15.5" font-weight="bold" fill="#fff">9</text>
<path d="M868 497.5 L876 506 M862 508.5 L876 506 L898 508.5 M872 504 L896 507.5" stroke="#7d7d7d" stroke-width="2" fill="none" stroke-linecap="round"/>
<circle cx="865.5" cy="494" r="3.5" fill="#fff" stroke="#7d7d7d" stroke-width="1.4"/><circle cx="858" cy="509.3" r="3.5" fill="#fff" stroke="#7d7d7d" stroke-width="1.4"/>
<path d="M768.5 595.5 L778.5 603 M780.5 588.5 L778.5 603 L780.5 624 M777 600 L779.5 622" stroke="#7d7d7d" stroke-width="2" fill="none" stroke-linecap="round"/>
<circle cx="765.4" cy="593.3" r="3.5" fill="#fff" stroke="#7d7d7d" stroke-width="1.4"/><circle cx="780.7" cy="585" r="3.5" fill="#fff" stroke="#7d7d7d" stroke-width="1.4"/>
</svg>
<!-- SCROLLBAR -->
<div class="a" style="left:1900px;top:151px;width:4px;height:879px;background:linear-gradient(90deg,#f1f1f1,#fafafa)"></div>
<div class="a" style="left:1904px;top:151px;width:16px;height:879px;background:#fcfcfc"></div>
<svg style="left:1904px;top:159px" width="14" height="8" viewBox="0 0 14 8"><path d="M0 7 L7 0 L14 7 Z" fill="#8b8b8b"/></svg>
<div class="a" style="left:1905px;top:349px;width:11px;height:465px;background:#8b8b8b;border-radius:5.5px"></div>
<svg style="left:1904px;top:1015px" width="14" height="8" viewBox="0 0 14 8"><path d="M0 0 L14 0 L7 7 Z" fill="#8b8b8b"/></svg>
<!-- TASKBAR -->
<div id="taskbar"></div>
<div class="a taskbar-border" style="left:0;top:1024px;width:1920px;height:6px;background:linear-gradient(180deg,rgba(255,255,255,0) 0,rgba(250,248,246,0.5) 40%,rgba(247,245,243,0.8) 100%)"></div>
<div class="a" style="left:0;top:1030px;width:1920px;height:1px;background:#cfcbc8"></div>
<svg style="left:20px;top:1045px" width="20" height="20" viewBox="0 0 20 20"><path d="M0 2.8 L8.2 1.7 V9.4 H0 Z M9.2 1.5 L20 0 V9.4 H9.2 Z M0 10.4 H8.2 V18.3 L0 17.2 Z M9.2 10.4 H20 V20 L9.2 18.5 Z" fill="#000"/></svg>
<div class="a" style="left:61px;top:1031px;width:358px;height:49px;background:#fff"></div>
<svg style="left:75px;top:1045px" width="21" height="21" viewBox="0 0 21 21"><circle cx="12.5" cy="8.5" r="7" fill="none" stroke="#1f1f1f" stroke-width="1.6"/><path d="M7.5 13.5 L1 20" stroke="#1f1f1f" stroke-width="1.8"/></svg>
<div class="a" style="left:110px;top:1044px;font-size:18px;line-height:22px;color:#333">Cerca</div>
<svg style="left:440px;top:1044px" width="22" height="22" viewBox="0 0 22 22"><rect x="1.5" y="5.5" width="13" height="11" fill="none" stroke="#1f1f1f" stroke-width="1.5"/><path d="M0 2.5 H16 M0 19.5 H16 M19 1 V5 M19 8 V21" stroke="#1f1f1f" stroke-width="1.5"/><rect x="17.5" y="5.5" width="3" height="2.5" fill="#1f1f1f"/></svg>
<!-- edge -->
<svg style="left:498px;top:1040px" width="30" height="30" viewBox="0 0 30 30"><defs><linearGradient id="eg" x1="0.1" y1="0.9" x2="0.9" y2="0.1"><stop offset="0" stop-color="#0b4ea2"/><stop offset="0.55" stop-color="#1a8ad6"/><stop offset="1" stop-color="#40d27c"/></linearGradient></defs><circle cx="15" cy="15" r="14.2" fill="url(#eg)"/><path d="M9.5 18 Q9 10.5 16 10.5 Q21.5 10.5 22 15.5 H14.5 Q15 21 21 21.5 Q25 21.8 28.5 19.5 Q26 27 17 28.5 Q10 27 9.5 18Z" fill="#dcdee4"/><path d="M14.5 15.5 Q15 21 21 21.5 Q25 21.8 28.5 19.5 Q27 17 23 17 Q20 17 19 15.5Z" fill="#1f7fd0" opacity="0.5"/></svg>
<!-- mail -->
<svg style="left:560px;top:1041px" width="31" height="28" viewBox="0 0 31 28"><path d="M0 11 L15.5 1 L31 11 V27 H0 Z" fill="#0a5cb8"/><path d="M5 9 H26 V16 L15.5 22 L5 16Z" fill="#fff"/><path d="M0 11 L15.5 20 L31 11 V27 H0Z" fill="#1e90ef"/><path d="M0 27 L15.5 17 L31 27Z" fill="#47b0ff"/></svg>
<!-- explorer -->
<svg style="left:622px;top:1041px" width="30" height="28" viewBox="0 0 30 28"><path d="M0 3 H11 L14 6 H30 V27 H0Z" fill="#f0b429"/><rect x="0" y="9" width="30" height="18" fill="#ffd35a"/><rect x="9" y="17" width="12" height="10" fill="#2a7dd8"/><rect x="12" y="20" width="6" height="7" fill="#ffd35a"/></svg>
<div class="a" style="left:613px;top:1076px;width:50px;height:4px;background:#d0293a"></div>
<!-- store -->
<svg style="left:685px;top:1040px" width="29" height="30" viewBox="0 0 29 30"><path d="M9 6 Q9 1 14.5 1 Q20 1 20 6" fill="none" stroke="#0f4a8a" stroke-width="2"/><rect x="0" y="6" width="29" height="24" rx="2" fill="#0f4f9a"/><rect x="8" y="12" width="6" height="6" fill="#f25022"/><rect x="15" y="12" width="6" height="6" fill="#7fba00"/><rect x="8" y="19" width="6" height="6" fill="#00a4ef"/><rect x="15" y="19" width="6" height="6" fill="#ffb900"/></svg>
<!-- contacts -->
<svg style="left:747px;top:1044px" width="30" height="22" viewBox="0 0 30 22"><rect x="0" y="0" width="30" height="22" fill="#cde3f7" stroke="#6aa7e0" stroke-width="1"/><rect x="3" y="4" width="9" height="11" fill="#6aaee8"/><path d="M15 5 H27 M15 9 H27 M15 13 H25 M3 18 H27" stroke="#3d7fc8" stroke-width="1.6"/></svg>
<!-- solitaire -->
<svg style="left:809px;top:1038px" width="30" height="32" viewBox="0 0 30 32"><rect x="10" y="2" width="16" height="24" rx="2" fill="#fff" stroke="#6a8db8" stroke-width="1.5" transform="rotate(12 18 14)"/><rect x="3" y="7" width="16" height="24" rx="2" fill="#fff" stroke="#444" stroke-width="1.5" transform="rotate(-8 11 19)"/><path d="M11 12 Q6 18 8 21 Q10 23 11 20 L10 25 H13 L12 20 Q13 23 15 21 Q17 18 11 12Z" fill="#111"/><path d="M23 0 V7 M19.5 3.5 H26.5" stroke="#2a6fcf" stroke-width="1.6"/></svg>
<!-- photoshop -->
<svg style="left:871px;top:1041px" width="29" height="28" viewBox="0 0 29 28"><rect x="0" y="0" width="29" height="28" fill="#8da0c8"/><rect x="1.5" y="1.5" width="26" height="25" fill="#1d1f6e"/><text x="4.5" y="19.5" font-family="Liberation Sans" font-weight="bold" font-size="13.5" fill="#a9c4ee">Ps</text></svg>
<div class="a" style="left:861px;top:1076px;width:50px;height:4px;background:#d0293a"></div>
<!-- whatsapp -->
<svg style="left:932px;top:1040px" width="31" height="31" viewBox="0 0 31 31"><path d="M15.5 1.5 A14 14 0 1 1 4.5 24 L1.5 30 L7.5 27 A14 14 0 0 1 15.5 1.5Z" fill="#fff" stroke="#25b33a" stroke-width="2.6"/><path d="M10 9 Q8 10 9 14 Q11 19 17 22 Q20 23 22 21 L21 18.5 L18 17.5 L16.5 19 Q13 17 12 14 L13.5 12 L12 9 Z" fill="#25b33a"/></svg>
<!-- chrome active -->
<div class="a" style="left:980px;top:1031px;width:61px;height:49px;background:rgba(255,255,255,0.45)"></div>
<svg style="left:994px;top:1040px" width="31" height="31" viewBox="0 0 31 31"><circle cx="15.5" cy="15.5" r="15" fill="#db4437"/><path d="M15.5 15.5 L28.5 8 A15 15 0 0 1 15.5 30.5Z" fill="#ffcd40"/><path d="M15.5 15.5 L15.5 30.5 A15 15 0 0 1 2.5 8 Z" fill="#0f9d58"/><path d="M2.5 8 A15 15 0 0 1 28.5 8 L15.5 8 Z" fill="#db4437"/><circle cx="15.5" cy="15.5" r="7" fill="#fff"/><circle cx="15.5" cy="15.5" r="5.6" fill="#4285f4"/></svg>
<div class="a" style="left:980px;top:1076px;width:61px;height:4px;background:#d0293a"></div>
<!-- other app -->
<svg style="left:1057px;top:1040px" width="31" height="30" viewBox="0 0 31 30"><rect x="6" y="4" width="22" height="26" fill="#e8eef5" stroke="#1f3a5a" stroke-width="1.6"/><path d="M10 10 H24 M10 14 H24 M10 18 H24 M10 22 H20" stroke="#1f3a5a" stroke-width="1.4"/><path d="M2 6 Q6 0 12 3 L11 11 Q6 9 3 12Z" fill="#1f3a5a"/><rect x="1" y="14" width="6" height="14" fill="#34506f"/></svg>
<div class="a" style="left:1047px;top:1076px;width:50px;height:4px;background:#d0293a"></div>
<!-- weather -->
<svg style="left:1342px;top:1038px" width="32" height="32" viewBox="0 0 32 32"><circle cx="18" cy="15" r="8.5" fill="#f7b733"/><path d="M4 14 Q4 8 10 8 Q12 4 17 6 Q20 8 19 12 Q23 12 23 16 Q23 19 19 19 H6 Q2 19 4 14Z" fill="#b7cde4"/><path d="M8 24 Q8 20 13 20 Q15 17 19 18 Q23 19 23 22 Q27 22 27 26 Q27 29 23 29 H11 Q7 29 8 24Z" fill="#a9c3e0"/></svg>
<div class="a" style="left:1383px;top:1045px;font-size:17.6px;line-height:22px;color:#1f1f1f">10°C&nbsp; Nuvole sparse</div>
<svg style="left:1573px;top:1048px" width="17" height="10" viewBox="0 0 17 10"><path d="M1 9 L8.5 1.5 L16 9" fill="none" stroke="#1f1f1f" stroke-width="1.5"/></svg>
<svg style="left:1602px;top:1044px" width="20" height="22" viewBox="0 0 20 22"><rect x="3" y="4" width="12" height="15" rx="2" fill="none" stroke="#1f1f1f" stroke-width="1.4"/><path d="M15 9 L19 7 V16 L15 14" fill="none" stroke="#1f1f1f" stroke-width="1.3"/><path d="M6 1 H12" stroke="#1f1f1f" stroke-width="1.3"/></svg>
<svg style="left:1628px;top:1049px" width="29" height="13" viewBox="0 0 29 13"><rect x="3" y="1.5" width="24" height="10" fill="none" stroke="#1f1f1f" stroke-width="1.4"/><rect x="5" y="3.5" width="20" height="6" fill="#1f1f1f"/><rect x="0" y="4.5" width="3" height="4" fill="#1f1f1f"/></svg>
<svg style="left:1663px;top:1045px" width="20" height="20" viewBox="0 0 20 20"><path d="M2 19 A17 17 0 0 1 19 2 M6 19 A13 13 0 0 1 19 6 M10 19 A9 9 0 0 1 19 10 M14 19 A5 5 0 0 1 19 14" fill="none" stroke="#1f1f1f" stroke-width="1.4"/></svg>
<svg style="left:1692px;top:1045px" width="22" height="20" viewBox="0 0 22 20"><path d="M1 7 H5 L10 2 V18 L5 13 H1Z" fill="none" stroke="#1f1f1f" stroke-width="1.4"/><path d="M13 7 Q15 10 13 13 M16 4.5 Q20 10 16 15.5" fill="none" stroke="#1f1f1f" stroke-width="1.4"/></svg>
<div class="a" style="left:1728px;top:1032.5px;width:24px;font-size:15px;line-height:23px;color:#1f1f1f;text-align:center">ITA<br>142</div>
<div class="a" style="left:1768px;top:1032.5px;width:80px;font-size:15px;line-height:23px;color:#1f1f1f;text-align:center">17:54<br>14/01/2026</div>
<svg style="left:1868px;top:1044px" width="30" height="32" viewBox="0 0 30 32"><path d="M1 1 H22 V15 H8 L3 19 V15 H1Z" fill="#111"/><path d="M5 5 H18 M5 8 H18 M5 11 H14" stroke="#e7dad1" stroke-width="1.2"/><circle cx="18" cy="20" r="7.5" fill="#d9d2cd" stroke="#888" stroke-width="1"/><text x="18" y="25" text-anchor="middle" font-family="Liberation Sans" font-size="14" fill="#111">4</text></svg>

</body></html>
